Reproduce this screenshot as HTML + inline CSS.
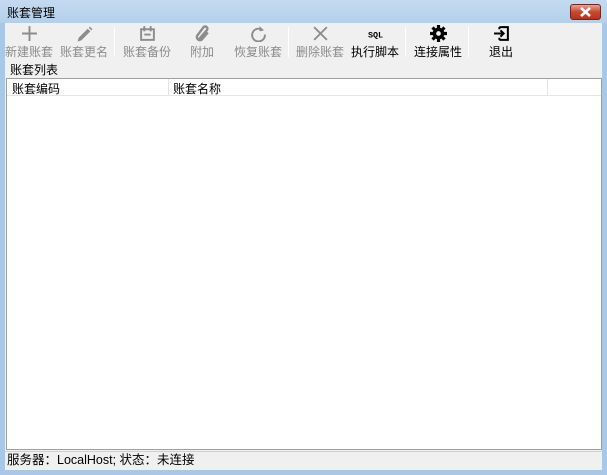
<!DOCTYPE html>
<html><head><meta charset="utf-8"><style>
*{margin:0;padding:0;box-sizing:border-box}
body{width:607px;height:475px;overflow:hidden;background:#a9c8e6;font-family:"Liberation Sans","Noto Sans CJK SC",sans-serif;font-size:12px;position:relative}
.title{position:absolute;left:0;top:0;width:607px;height:23px;background:linear-gradient(#c4daf0,#b5cfea);color:#000}
.title span{position:absolute;left:7px;top:4px;font-size:12px}
.close{position:absolute;left:570px;top:4px;width:31px;height:16px;border:1px solid #6b2a20;border-radius:3px;background:linear-gradient(#e8a294,#c8482f 50%,#b8321c);}
.client{position:absolute;left:5px;top:23px;width:597px;height:447px;background:#f0f0f0}
.tb{position:absolute;top:0;height:38px;text-align:center;color:#8c8c8c;font-size:12px}
.tb.on{color:#000}
.tb svg{display:block;margin:2px auto 0;height:17px}
.tb div{margin-top:1px;white-space:nowrap}
.sep{position:absolute;top:4px;width:1px;height:30px;background:#c8c8c8;border-right:1px solid #fff}
.lbl{position:absolute;left:5px;top:38px}
.list{position:absolute;left:1px;top:55px;width:596px;height:372px;background:#fff;border:1px solid #a0a0a0}
.hdr{position:absolute;left:0;top:0;width:100%;height:17px;border-bottom:1px solid #e5e5e5;background:#fff}
.hdr span{position:absolute;top:1px}
.hdr i{position:absolute;top:0;width:1px;height:17px;background:#e5e5e5}
.status{position:absolute;left:0;top:428px;width:597px;height:19px;border-top:1px solid #d0d0d0;padding:0 0 0 2px;font-size:12.5px;line-height:17px}
</style></head><body>
<div class="title"><span>账套管理</span><div class="close"><svg width="29" height="14" viewBox="0 0 29 14"><path d="M10 3L19 11M19 3L10 11" stroke="#fff" stroke-width="2.6"/></svg></div></div>
<div class="client">
<div class="tb" style="left:0;width:48px"><svg viewBox="0 0 16 16" width="17"><path d="M8 1V15M1 8H15" stroke="#8c8c8c" stroke-width="1.8"/></svg><div>新建账套</div></div>
<div class="tb" style="left:55px;width:48px"><svg viewBox="0 0 16 16" width="17"><path d="M2.5 12L11 3.5L13.5 6L5 14.5L1.5 15.5Z" fill="#8c8c8c"/><path d="M12 2.5L13 1.5L15.5 4L14.5 5Z" fill="#8c8c8c"/></svg><div>账套更名</div></div>
<div class="sep" style="left:109px"></div>
<div class="tb" style="left:118px;width:48px"><svg viewBox="0 0 16 16" width="17"><rect x="2" y="4" width="12" height="10" fill="none" stroke="#8c8c8c" stroke-width="1.8"/><path d="M5 1V6M11 1V6M5 9H11" stroke="#8c8c8c" stroke-width="1.8"/></svg><div>账套备份</div></div>
<div class="tb" style="left:178px;width:38px"><svg viewBox="0 0 16 16" width="17"><path d="M5 13L12 5A2 2 0 0 0 9 2L3 10A3 3 0 0 0 7 14L13 7" fill="none" stroke="#8c8c8c" stroke-width="2.2"/></svg><div>附加</div></div>
<div class="tb" style="left:229px;width:48px"><svg viewBox="0 0 16 16" width="17"><path d="M12 5A6 6 0 1 0 14 9" fill="none" stroke="#8c8c8c" stroke-width="1.8"/><path d="M9 1L13 5L9 6Z" fill="#8c8c8c"/></svg><div>恢复账套</div></div>
<div class="sep" style="left:283px"></div>
<div class="tb" style="left:291px;width:48px"><svg viewBox="0 0 16 16" width="17"><path d="M2 2L14 14M14 2L2 14" stroke="#8c8c8c" stroke-width="1.8"/></svg><div>删除账套</div></div>
<div class="tb on" style="left:346px;width:48px"><svg viewBox="0 0 20 16" width="21"><text x="10" y="12" font-size="8" font-family="Liberation Mono" text-anchor="middle" fill="#000" font-weight="bold">SQL</text></svg><div>执行脚本</div></div>
<div class="sep" style="left:400px"></div>
<div class="tb on" style="left:409px;width:48px"><svg viewBox="0 0 16 16" width="17"><g fill="#000"><circle cx="8" cy="8" r="5.5"/><path d="M6.5 0H9.5V16H6.5ZM0 6.5H16V9.5H0Z"/><path d="M6.5 0H9.5V16H6.5Z" transform="rotate(45 8 8)"/><path d="M6.5 0H9.5V16H6.5Z" transform="rotate(-45 8 8)"/></g><circle cx="8" cy="8" r="2.2" fill="#f0f0f0"/></svg><div>连接属性</div></div>
<div class="sep" style="left:463px"></div>
<div class="tb on" style="left:477px;width:38px"><svg viewBox="0 0 16 16" width="17"><path d="M6 2H14V14H6M6 4V2M6 12V14" fill="none" stroke="#000" stroke-width="1.9"/><path d="M1 8H10M7 5L10 8L7 11" fill="none" stroke="#000" stroke-width="1.9"/></svg><div>退出</div></div>
<div class="lbl">账套列表</div>
<div class="list"><div class="hdr"><span style="left:5px">账套编码</span><i style="left:161px"></i><span style="left:166px">账套名称</span><i style="left:540px"></i></div></div>
<div class="status">服务器：LocalHost; 状态：未连接</div>
</div>
</body></html>
